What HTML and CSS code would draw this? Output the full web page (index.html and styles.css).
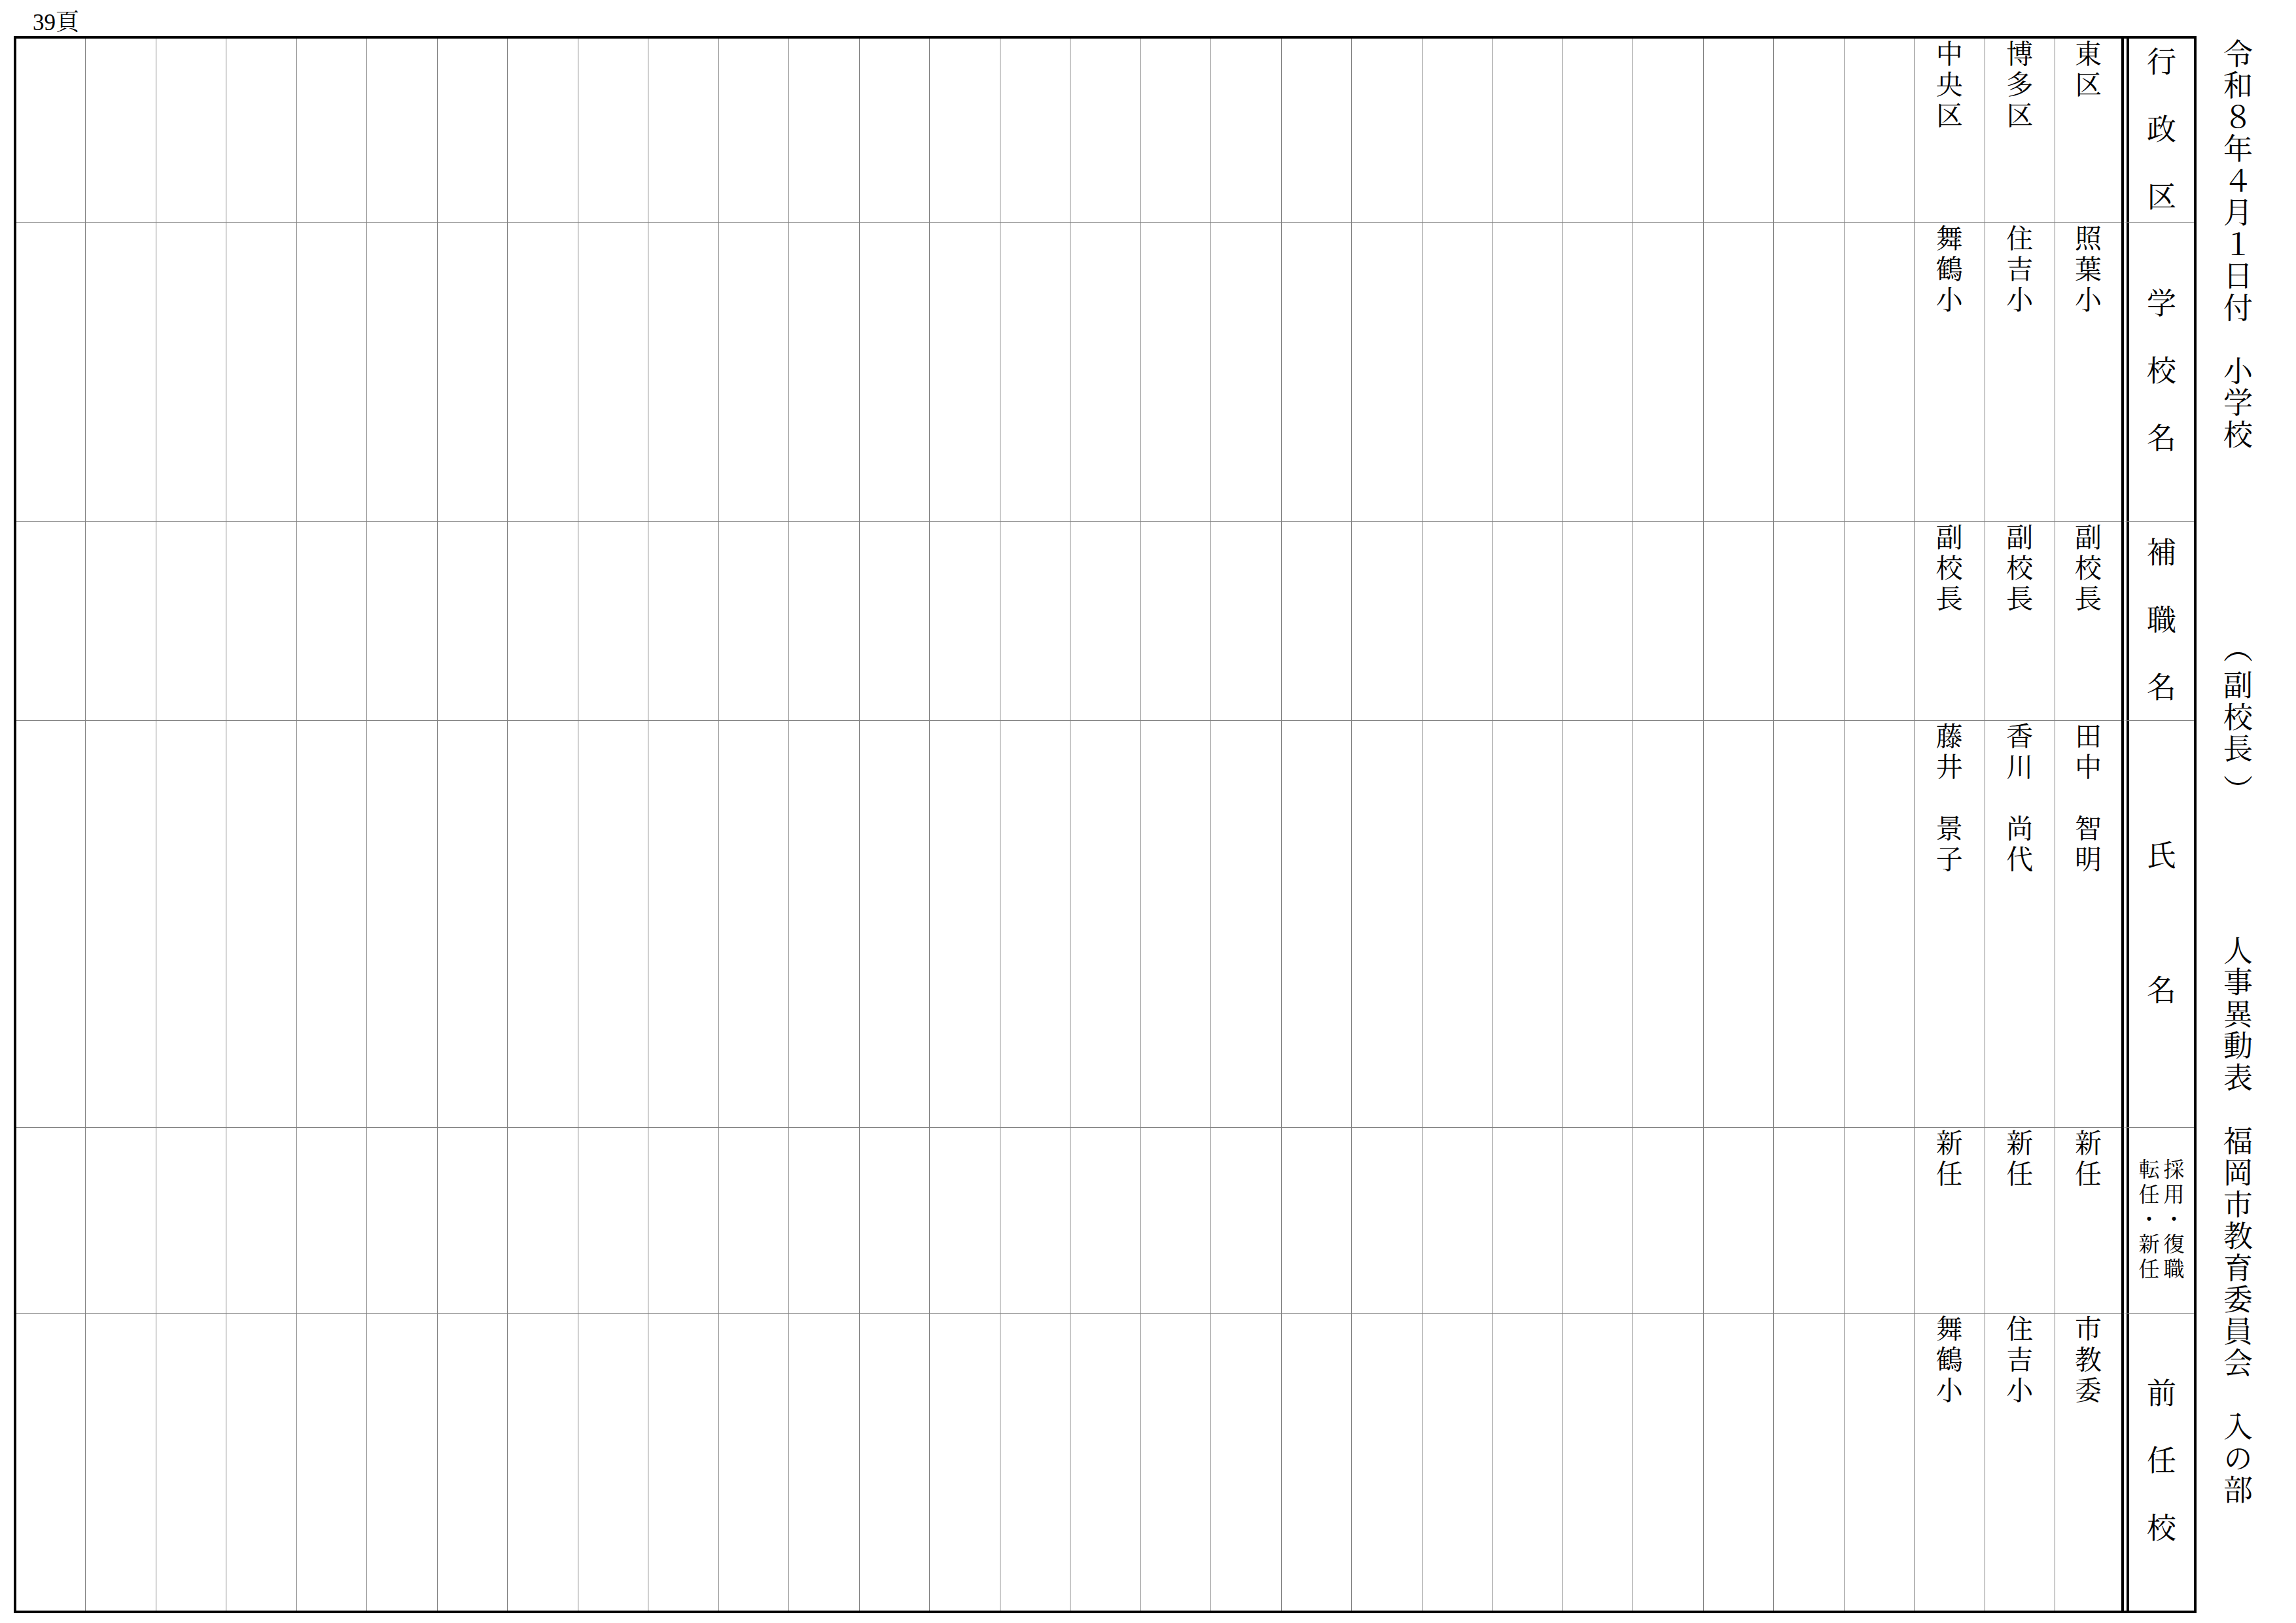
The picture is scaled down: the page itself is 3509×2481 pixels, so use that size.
FILE: index.html
```html
<!DOCTYPE html>
<html lang="ja">
<head>
<meta charset="utf-8">
<title>人事異動表 入の部</title>
<link rel="stylesheet" href="styles.css">
</head>
<body>
<div class="page">
  <div class="sheet">
    <div class="pageno"><span class="num">39</span><span class="pg">頁</span></div>
    <div class="grid">
      <div class="cell h"><span class="hv">行　政　区</span></div>
      <div class="cell"><span class="v">東区</span></div>
      <div class="cell"><span class="v">博多区</span></div>
      <div class="cell"><span class="v">中央区</span></div>
      <div class="cell"></div><div class="cell"></div><div class="cell"></div><div class="cell"></div><div class="cell"></div><div class="cell"></div><div class="cell"></div><div class="cell"></div><div class="cell"></div>
      <div class="cell"></div><div class="cell"></div><div class="cell"></div><div class="cell"></div><div class="cell"></div><div class="cell"></div><div class="cell"></div><div class="cell"></div><div class="cell"></div>
      <div class="cell"></div><div class="cell"></div><div class="cell"></div><div class="cell"></div><div class="cell"></div><div class="cell"></div><div class="cell"></div><div class="cell"></div><div class="cell"></div>

      <div class="cell h"><span class="hv">学　校　名</span></div>
      <div class="cell"><span class="v">照葉小</span></div>
      <div class="cell"><span class="v">住吉小</span></div>
      <div class="cell"><span class="v">舞鶴小</span></div>
      <div class="cell"></div><div class="cell"></div><div class="cell"></div><div class="cell"></div><div class="cell"></div><div class="cell"></div><div class="cell"></div><div class="cell"></div><div class="cell"></div>
      <div class="cell"></div><div class="cell"></div><div class="cell"></div><div class="cell"></div><div class="cell"></div><div class="cell"></div><div class="cell"></div><div class="cell"></div><div class="cell"></div>
      <div class="cell"></div><div class="cell"></div><div class="cell"></div><div class="cell"></div><div class="cell"></div><div class="cell"></div><div class="cell"></div><div class="cell"></div><div class="cell"></div>

      <div class="cell h"><span class="hv">補　職　名</span></div>
      <div class="cell"><span class="v">副校長</span></div>
      <div class="cell"><span class="v">副校長</span></div>
      <div class="cell"><span class="v">副校長</span></div>
      <div class="cell"></div><div class="cell"></div><div class="cell"></div><div class="cell"></div><div class="cell"></div><div class="cell"></div><div class="cell"></div><div class="cell"></div><div class="cell"></div>
      <div class="cell"></div><div class="cell"></div><div class="cell"></div><div class="cell"></div><div class="cell"></div><div class="cell"></div><div class="cell"></div><div class="cell"></div><div class="cell"></div>
      <div class="cell"></div><div class="cell"></div><div class="cell"></div><div class="cell"></div><div class="cell"></div><div class="cell"></div><div class="cell"></div><div class="cell"></div><div class="cell"></div>

      <div class="cell h"><span class="hv">氏　　　名</span></div>
      <div class="cell"><span class="v">田中　智明</span></div>
      <div class="cell"><span class="v">香川　尚代</span></div>
      <div class="cell"><span class="v">藤井　景子</span></div>
      <div class="cell"></div><div class="cell"></div><div class="cell"></div><div class="cell"></div><div class="cell"></div><div class="cell"></div><div class="cell"></div><div class="cell"></div><div class="cell"></div>
      <div class="cell"></div><div class="cell"></div><div class="cell"></div><div class="cell"></div><div class="cell"></div><div class="cell"></div><div class="cell"></div><div class="cell"></div><div class="cell"></div>
      <div class="cell"></div><div class="cell"></div><div class="cell"></div><div class="cell"></div><div class="cell"></div><div class="cell"></div><div class="cell"></div><div class="cell"></div><div class="cell"></div>

      <div class="cell h"><span class="hs">採用・復職<br>転任・新任</span></div>
      <div class="cell"><span class="v">新任</span></div>
      <div class="cell"><span class="v">新任</span></div>
      <div class="cell"><span class="v">新任</span></div>
      <div class="cell"></div><div class="cell"></div><div class="cell"></div><div class="cell"></div><div class="cell"></div><div class="cell"></div><div class="cell"></div><div class="cell"></div><div class="cell"></div>
      <div class="cell"></div><div class="cell"></div><div class="cell"></div><div class="cell"></div><div class="cell"></div><div class="cell"></div><div class="cell"></div><div class="cell"></div><div class="cell"></div>
      <div class="cell"></div><div class="cell"></div><div class="cell"></div><div class="cell"></div><div class="cell"></div><div class="cell"></div><div class="cell"></div><div class="cell"></div><div class="cell"></div>

      <div class="cell h"><span class="hv">前　任　校</span></div>
      <div class="cell"><span class="v">市教委</span></div>
      <div class="cell"><span class="v">住吉小</span></div>
      <div class="cell"><span class="v">舞鶴小</span></div>
      <div class="cell"></div><div class="cell"></div><div class="cell"></div><div class="cell"></div><div class="cell"></div><div class="cell"></div><div class="cell"></div><div class="cell"></div><div class="cell"></div>
      <div class="cell"></div><div class="cell"></div><div class="cell"></div><div class="cell"></div><div class="cell"></div><div class="cell"></div><div class="cell"></div><div class="cell"></div><div class="cell"></div>
      <div class="cell"></div><div class="cell"></div><div class="cell"></div><div class="cell"></div><div class="cell"></div><div class="cell"></div><div class="cell"></div><div class="cell"></div><div class="cell"></div>
    </div>
  </div>
  <div class="title">
    <span class="tv">令和８年４月１日付　小学校</span>
    <span class="tv tv-role"><span class="po">（</span>副校長<span class="pc">）</span></span>
    <span class="tv tv-org">人事異動表　福岡市教育委員会　入の部</span>
  </div>
</div>
</body>
</html>
```

FILE: styles.css
```css
html, body {
  margin: 0;
  padding: 0;
  background: #ffffff;
}

body {
  font-family: "Noto Serif CJK JP", "Noto Sans CJK JP", serif;
  color: #000000;
  text-spacing-trim: space-all;
}

.page {
  display: flex;
  align-items: flex-start;
  width: 3509px;
  height: 2481px;
  box-sizing: border-box;
  padding-left: 21px;
}

.sheet {
  display: flex;
  flex-direction: column;
}

.pageno {
  height: 55px;
  box-sizing: border-box;
  padding: 12px 0 0 29px;
  font-size: 35px;
  line-height: 37px;
}

.num {
  font-family: "Liberation Serif", serif;
}

.pg {
  font-size: 36px;
}

.grid {
  display: grid;
  direction: rtl;
  border: 4px solid #000000;
  grid-template-columns: 111px 102px repeat(28, 107.5px) 105px;
  grid-template-rows: 281px 457px 304px 622px 284px 455px;
}

.cell {
  direction: ltr;
  box-sizing: border-box;
  border-left: 1px solid #808080;
  border-top: 1px solid #808080;
  display: flex;
  justify-content: center;
  align-items: flex-start;
}

.cell:nth-child(31n) {
  border-left: 0;
}

.cell:nth-child(-n+31) {
  border-top: 0;
}

.cell.h {
  border-left: 12px double #000000;
  align-items: center;
}

.v {
  writing-mode: vertical-rl;
  font-size: 41px;
  letter-spacing: 6px;
  line-height: 1;
  padding-top: 2px;
}

.hv {
  writing-mode: vertical-rl;
  font-size: 45px;
  letter-spacing: 6.5px;
  line-height: 1;
}

.hs {
  writing-mode: vertical-rl;
  font-size: 32px;
  letter-spacing: 6px;
  line-height: 38px;
}

.title {
  display: flex;
  flex-direction: column;
  margin-left: 41px;
  padding-top: 59px;
}

.tv {
  writing-mode: vertical-rl;
  font-size: 45px;
  letter-spacing: 3.5px;
  line-height: 1;
}

.tv-role {
  margin-top: 278px;
}

.po {
  padding-inline-end: 8px;
}

.pc {
  padding-inline-start: 14px;
}

.tv-org {
  margin-top: 198px;
}
```
